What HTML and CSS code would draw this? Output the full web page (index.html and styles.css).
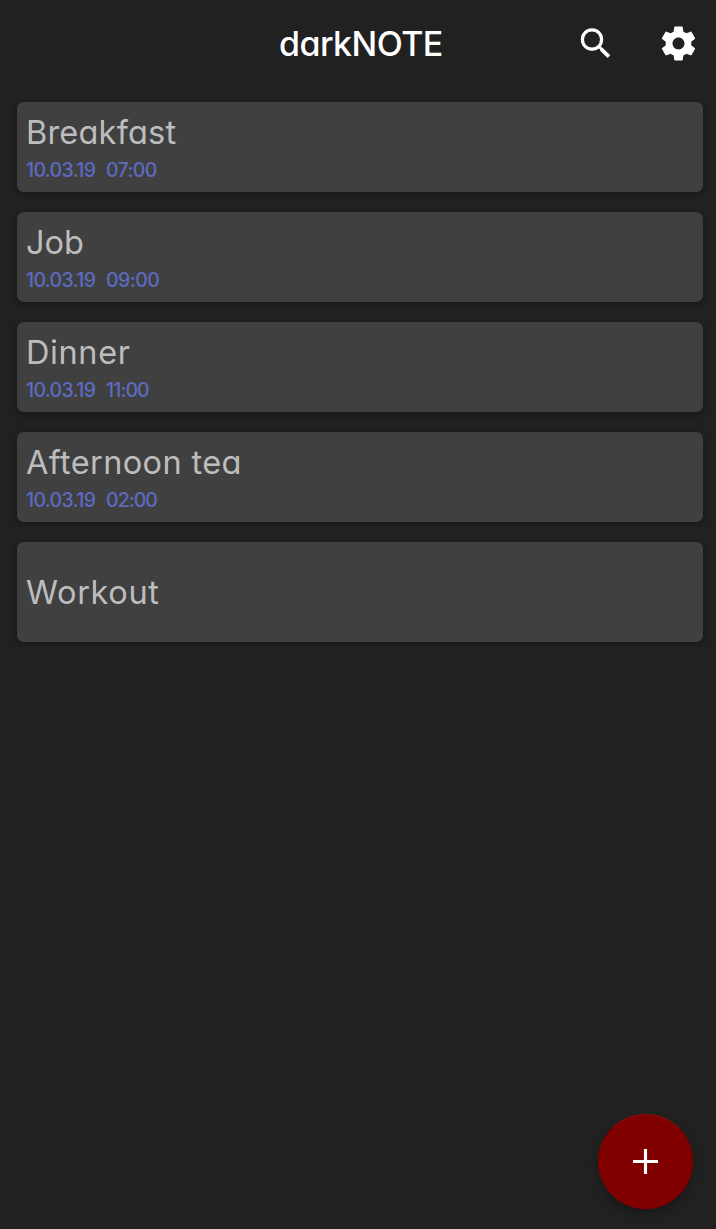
FILE: index.html
```html
<!DOCTYPE html>
<html lang="en">
<head>
<meta charset="utf-8">
<title>darkNOTE</title>
<link rel="stylesheet" href="styles.css">
</head>
<body>
<header class="bar">
  <h1 class="brand">darkNOTE</h1>
  <nav class="actions">
    <svg class="search" viewBox="0 0 32 32"><circle cx="12" cy="11.5" r="9.6"/><path class="neck" d="M19 18.5l3 3"/><path class="handle" d="M21.3 21.1l7.6 7.6"/></svg>
    <svg class="gear" viewBox="0 0 24 24"><path d="M19.43 12.98c.04-.32.07-.64.07-.98s-.03-.66-.07-.98l2.11-1.65c.19-.15.24-.42.12-.64l-2-3.46c-.12-.22-.39-.3-.61-.22l-2.49 1c-.52-.4-1.08-.73-1.69-.98l-.38-2.65C14.46 2.18 14.25 2 14 2h-4c-.25 0-.46.18-.49.42l-.38 2.65c-.61.25-1.17.59-1.69.98l-2.49-1c-.23-.09-.49 0-.61.22l-2 3.46c-.13.22-.07.49.12.64l2.11 1.65c-.04.32-.07.65-.07.98s.03.66.07.98l-2.11 1.65c-.19.15-.24.42-.12.64l2 3.46c.12.22.39.3.61.22l2.49-1c.52.4 1.08.73 1.69.98l.38 2.65c.03.24.24.42.49.42h4c.25 0 .46-.18.49-.42l.38-2.65c.61-.25 1.17-.59 1.69-.98l2.49 1c.23.09.49 0 .61-.22l2-3.46c.12-.22.07-.49-.12-.64l-2.11-1.65zM12 15.5c-1.93 0-3.5-1.57-3.5-3.5s1.57-3.5 3.5-3.5 3.5 1.57 3.5 3.5-1.57 3.5-3.5 3.5z"/></svg>
  </nav>
</header>
<main class="notes">
  <article class="note"><h2 class="title breakfast">Breakfast</h2><p class="when"><span class="date">10.03.19</span><span class="time">07:00</span></p></article>
  <article class="note"><h2 class="title job">Job</h2><p class="when"><span class="date">10.03.19</span><span class="time nine">09:00</span></p></article>
  <article class="note"><h2 class="title dinner">Dinner</h2><p class="when"><span class="date">10.03.19</span><span class="time eleven">11:00</span></p></article>
  <article class="note"><h2 class="title tea">Afternoon tea</h2><p class="when"><span class="date">10.03.19</span><span class="time two">02:00</span></p></article>
  <article class="note plain"><h2 class="title workout">Workout</h2></article>
</main>
<button class="add" aria-label="Add note"><svg viewBox="0 0 24 24"><path d="M12 0v24M0 12h24"/></svg></button>
</body>
</html>
```
FILE: styles.css
```css
* { box-sizing: border-box; margin: 0; padding: 0; }
body {
  min-height: 1229px;
  background: #212121;
  font-family: Inter, "Open Sans", sans-serif;
  font-feature-settings: "cv11";
  white-space: nowrap;
}
.bar {
  display: grid;
  grid-template-columns: 279px 1fr auto;
  align-items: center;
  height: 88px;
  padding-right: 21px;
}
.brand {
  grid-column: 2;
  color: #fff;
  font-size: 34px;
  font-weight: 500;
  line-height: 40px;
  letter-spacing: -.55px;
}
.actions { display: flex; align-items: center; gap: 49px; margin-bottom: 1px; }
.actions svg { display: block; }
.search { width: 32px; height: 32px; fill: none; stroke: #fff; stroke-width: 3.2; }
.search .neck { stroke-width: 2.8; }
.search .handle { stroke-width: 3.8; }
.gear { width: 41px; height: 41px; margin: 0 -3.5px; fill: #fff; }
.notes { display: flex; flex-direction: column; gap: 20px; padding: 14px 13px 0 17px; }
.note {
  height: 90px;
  padding: 11px 9px 0;
  border-radius: 7px;
  background: #404040;
  box-shadow: 0 2px 6px rgba(0, 0, 0, .32);
}
.plain { height: 100px; padding-top: 31px; }
.title { color: #bdbdbd; font-size: 32.5px; font-weight: 400; line-height: 40px; }
.breakfast { letter-spacing: .2px; }
.dinner { letter-spacing: .6px; }
.tea { letter-spacing: .36px; }
.workout { letter-spacing: .65px; }
.when { display: flex; color: #5c6bc0; font-size: 19.5px; font-weight: 450; line-height: 24px; padding-top: 5px; }
.date { width: 80px; letter-spacing: -.65px; }
.time { letter-spacing: -.6px; }
.nine { letter-spacing: -.5px; }
.eleven { letter-spacing: -.9px; }
.two { letter-spacing: -.95px; }
.add {
  position: fixed;
  left: 598px;
  top: 1114px;
  display: grid;
  place-items: center;
  width: 95px;
  height: 95px;
  border: 1px solid #800000;
  border-top-color: #930c0c;
  border-radius: 50%;
  background: #800000;
  box-shadow: 0 5px 10px rgba(0, 0, 0, .28);
}
.add svg { width: 25px; height: 25px; margin-bottom: 1px; stroke: #fff; stroke-width: 3; }
```
